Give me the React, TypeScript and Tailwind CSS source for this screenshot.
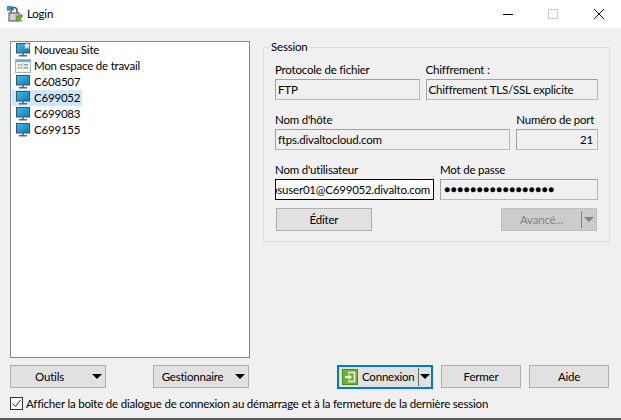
import React from 'react';

const font = { fontFamily: 'Lato, "Noto Sans", sans-serif' };

const Monitor = ({ star = false }: { star?: boolean }) => (
    <svg width="16" height="16" viewBox="0 0 16 16" className="shrink-0">
        <defs>
            <linearGradient id="scr" x1="0" y1="0" x2="1" y2="1">
                <stop offset="0" stopColor="#3fc0ea" />
                <stop offset="1" stopColor="#0b78b8" />
            </linearGradient>
        </defs>
        <rect x="1.5" y="1.5" width="13" height="9.5" fill="url(#scr)" stroke="#3b5566" />
        <rect x="7" y="11" width="2" height="2.5" fill="#6a7a84" />
        <rect x="4" y="13" width="8" height="1.5" fill="#5a6a74" />
        {star && <path d="M12 0l1.1 2.3 2.5.3-1.8 1.8.5 2.5-2.3-1.2-2.3 1.2.5-2.5L8.400 2.600l2.500-.3z" fill="#f4f6f8" stroke="#8b9aa5" strokeWidth="0.6" />}
    </svg>
);

const Workspace = () => (
    <svg width="16" height="16" viewBox="0 0 16 16" className="shrink-0">
        <rect x="0.5" y="1.500" width="15" height="13" fill="#f6f3ea" stroke="#9db6c8" />
        <rect x="1" y="2" width="14" height="2" fill="#58b4e6" />
        <rect x="3" y="6" width="1.500" height="1.500" fill="#d9893c" />
        <rect x="3" y="9" width="1.500" height="1.500" fill="#7d9c4b" />
        <rect x="5.500" y="6" width="1.500" height="1.500" fill="#8da0ad" />
        <rect x="5.500" y="9" width="1.500" height="1.500" fill="#8da0ad" />
        <rect x="9" y="6" width="4" height="1.500" fill="#8da0ad" />
        <rect x="9" y="9" width="4" height="1.500" fill="#8da0ad" />
        <rect x="7.800" y="5" width="0.600" height="7" fill="#b8c4cc" />
    </svg>
);

const sites = ['C608507', 'C699052', 'C699083', 'C699155'];

const Arrow = ({ color = 'border-t-black' }: { color?: string }) => (
    <span className={`w-0 h-0 border-x-[5px] border-x-transparent border-t-[5px] ${color}`} />
);

const Btn = ({ children, className = '' }: { children: React.ReactNode; className?: string }) => (
    <div className={`h-[23px] w-[96px] bg-[#e1e1e1] border border-[#adadad] flex items-center justify-center ${className}`}>
        {children}
    </div>
);

const MenuBtn = ({ label }: { label: string }) => (
    <div className="h-[23px] w-[96px] bg-[#e1e1e1] border border-[#adadad] flex items-center">
        <span className="flex-1 text-center">{label}</span>
        <span className="w-[17px] flex justify-center"><Arrow /></span>
    </div>
);

const Field = ({ label, value, width, className = '' }: { label: string; value: React.ReactNode; width: string; className?: string }) => (
    <div className={`flex flex-col ${width}`}>
        <label className="h-[15px] leading-[15px] -mt-[2px] mb-[2px] whitespace-nowrap">{label}</label>
        <div className={`h-[21px] border border-[#a0a0a0] border-r-[#b8b8b8] border-b-[#b8b8b8] bg-[#f0f0f0] flex items-center px-[2px] whitespace-nowrap overflow-hidden ${className}`}>
            {value}
        </div>
    </div>
);

export default function App() {
    return (
        <div className="w-[621px] h-[420px] bg-[#f0f0f0] flex flex-col overflow-hidden border-b-2 border-[#5a5a5a] text-[11.5px] tracking-[-0.2px] text-black" style={font}>
            {/* Title bar */}
            <div className="h-[28px] shrink-0 bg-white flex items-center">
                <svg width="18" height="20" viewBox="0 0 18 20" className="ml-[6px] mr-[3px]">
                    <path d="M1 2h6l-1.500 1.500 3 2-1 1.500-3-2L3 7H1z" fill="#2f8fe0" />
                    <rect x="3" y="9" width="10" height="8" fill="#d0d0d0" stroke="#4a4a4a" />
                    <path d="M5 9V6.500a3 3 0 0 1 6 0V9" fill="none" stroke="#555" strokeWidth="1.500" />
                    <path d="M10 11l2 2 3-3 2 2-3 3 2 2h-6z" fill="#5cb531" stroke="#3b8a1c" strokeWidth="0.500" />
                </svg>
                <span>Login</span>
                <div className="ml-auto flex items-center">
                    <span className="w-[10px] h-px bg-black mr-[35px]" />
                    <span className="w-[10px] h-[10px] border border-[#cccccc] mr-[36px]" />
                    <svg width="10" height="10" viewBox="0 0 10 10" className="mr-[17px]">
                        <path d="M0 0l10 10M10 0L0 10" stroke="#111" strokeWidth="1" />
                    </svg>
                </div>
            </div>

            {/* Main */}
            <div className="flex-1 flex flex-col px-[10px] pt-[13px]">
                <div className="flex h-[317px]">
                    <div className="w-[240px] bg-white border border-[#828790] pl-[1px] flex flex-col">
                        <div className="h-[16px] flex items-center gap-[3px] pl-[3px]"><Monitor star />Nouveau Site</div>
                        <div className="h-[16px] flex items-center gap-[3px] pl-[3px]"><Workspace />Mon espace de travail</div>
                        {sites.map((s) => (
                            <div key={s} className={`h-[16px] flex items-center gap-[3px] pl-[3px] w-[70px] ${s === 'C699052' ? 'bg-[#cce8ff]' : ''}`}>
                                <Monitor />{s}
                            </div>
                        ))}
                    </div>

                    <fieldset className="ml-[13px] w-[347px] h-[202px] -mt-[1px] border border-[#dcdcdc] px-[11px] min-w-0">
                        <legend className="-ml-[5px] px-px leading-[14px]">Session</legend>
                        <div className="flex gap-[6px] pt-[10px]">
                            <Field label="Protocole de fichier" value="FTP" width="w-[145px]" />
                            <Field label="Chiffrement :" value="Chiffrement TLS/SSL explicite" width="w-[173px]" />
                        </div>
                        <div className="flex gap-[6px] pt-[14px]">
                            <Field label="Nom d'hôte" value="ftps.divaltocloud.com" width="w-[236px]" />
                            <Field label="Numéro de port" value={<span className="ml-auto pr-[2px]">21</span>} width="w-[82px]" />
                        </div>
                        <div className="flex gap-[6px] pt-[14px]">
                            <Field label="Nom d'utilisateur" value={<span className="shrink-0">psuser01@C699052.divalto.com</span>} width="w-[159px]" className="border-black! bg-white justify-end pr-[3px]" />
                            <Field label="Mot de passe" value={<span className="tracking-[0.5px] text-[10px] ml-[1px]">●●●●●●●●●●●●●●●●●</span>} width="w-[159px]" />
                        </div>
                        <div className="flex justify-between pt-[8px] pl-px pr-px">
                            <Btn>Éditer</Btn>
                            <div className="h-[23px] w-[96px] bg-[#cccccc] border border-[#bfbfbf] flex items-center text-[#838383]">
                                <span className="flex-1 text-center">Avancé...</span>
                                <span className="h-[17px] w-px bg-[#838383]" />
                                <span className="w-[14px] flex justify-center"><Arrow color="border-t-[#838383]" /></span>
                            </div>
                        </div>
                    </fieldset>
                </div>

                {/* Bottom buttons */}
                <div className="flex items-center mt-[7px] h-[23px]">
                    <MenuBtn label="Outils" />
                    <div className="ml-[47px]"><MenuBtn label="Gestionnaire" /></div>
                    <div className="ml-[88px] h-[24px] w-[96px] border-2 border-[#0078d7] bg-[#e1e1e1] flex items-center">
                        <svg width="16" height="16" viewBox="0 0 16 16" className="ml-[3px] mr-[4px] shrink-0">
                            <rect x="0.500" y="0.500" width="15" height="15" fill="#6cb52d" stroke="#4b8f18" />
                            <path d="M6 3.500h6.500v9H6" fill="none" stroke="#fff" strokeWidth="1.500" />
                            <path d="M3 7h3.500V5l3.500 3-3.500 3V9H3z" fill="#fff" />
                        </svg>
                        <span>Connexion</span>
                        <span className="ml-auto h-[18px] w-px bg-[#6a6a6a]" />
                        <span className="w-[12px] flex justify-center"><Arrow /></span>
                    </div>
                    <Btn className="ml-[8px] w-[80px]!">Fermer</Btn>
                    <Btn className="ml-[8px] w-[80px]!">Aide</Btn>
                </div>

                {/* Checkbox */}
                <div className="flex items-center mt-[9px] h-[13px]">
                    <span className="w-[13px] h-[13px] border border-[#333] bg-white flex items-center justify-center">
                        <svg width="11" height="11" viewBox="0 0 11 11"><path d="M1.500 5.500l3 3 5-6.500" fill="none" stroke="#222" strokeWidth="1" /></svg>
                    </span>
                    <span className="ml-[3px] whitespace-nowrap">Afficher la boîte de dialogue de connexion au démarrage et à la fermeture de la dernière session</span>
                </div>
            </div>
        </div>
    );
}
